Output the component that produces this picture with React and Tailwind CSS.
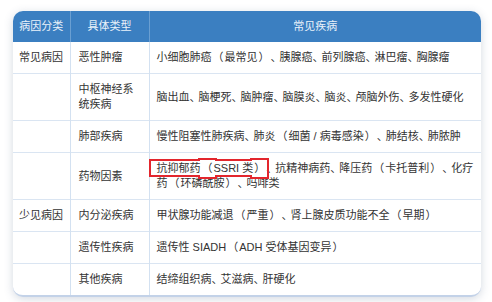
// CJK punctuation set in fixed boxes so spacing stays even
const PUNCT = {
  '（': 'inline-block w-[13px] text-center',
  '）': 'inline-block w-[13px] text-center',
  '、': 'inline-block w-[9px] text-left',
}

function fw(s) {
  return s.split(/([（）、])/).map((part, i) =>
    PUNCT[part] ? <span key={i} className={PUNCT[part]}>{part}</span> : part
  )
}

const rows = [
  { group: '常见病因', type: '恶性肿瘤', text: fw('小细胞肺癌（最常见）、胰腺癌、前列腺癌、淋巴瘤、胸腺瘤') },
  { group: '', type: '中枢神经系统疾病', text: fw('脑出血、脑梗死、脑肿瘤、脑膜炎、脑炎、颅脑外伤、多发性硬化') },
  { group: '', type: '肺部疾病', text: fw('慢性阻塞性肺疾病、肺炎（细菌 / 病毒感染）、肺结核、肺脓肿') },
  {
    group: '',
    type: '药物因素',
    text: (
      <>
        <span className="outline-2 outline-[#e3262d] outline-offset-[1px] pl-[5px] -ml-[5px]">{fw('抗抑郁药（SSRI 类）')}</span>
        {fw('、抗精神病药、降压药（卡托普利）、化疗')}
        <br />
        {fw('药（环磷酰胺）、吗啡类')}
      </>
    ),
  },
  { group: '少见病因', type: '内分泌疾病', text: fw('甲状腺功能减退（严重）、肾上腺皮质功能不全（早期）') },
  { group: '', type: '遗传性疾病', text: fw('遗传性 SIADH（ADH 受体基因变异）') },
  { group: '', type: '其他疾病', text: fw('结缔组织病、艾滋病、肝硬化') },
]

export default function App() {
  return (
    <div className="w-[492px] h-[302px] bg-white pt-[11px] pl-[13px]" style={{ fontFamily: '"Liberation Sans", "Noto Sans CJK SC", sans-serif' }}>
      <div className="w-[468px] rounded-[10px] overflow-hidden bg-white shadow-[0_2px_10px_rgba(60,80,120,0.22)] border-b-2 border-[#c3d2e8]">
        <table className="w-full table-fixed border-collapse text-[11px] leading-[15px] text-[#333]">
          <colgroup>
            <col className="w-[57px]" />
            <col className="w-[79px]" />
            <col />
          </colgroup>
          <thead>
            <tr className="bg-[#3b7fc1] text-[#eaf2fa]">
              <th className="font-normal py-2 px-0 border-r border-[#6a9fd2]">病因分类</th>
              <th className="font-normal py-2 px-1 border-r border-[#6a9fd2]">具体类型</th>
              <th className="font-normal py-2 px-1">常见疾病</th>
            </tr>
          </thead>
          <tbody>
            {rows.map((r, i) => (
              <tr key={i} className={i < rows.length - 1 ? 'border-b border-[#dae5f2]' : ''}>
                <td className="py-2 pl-[6px] pr-0 border-r border-[#d3e1f1] align-middle">{r.group}</td>
                <td className="py-2 pl-[8px] pr-2 border-r border-[#d3e1f1] align-middle">{r.type}</td>
                <td className="py-2 pl-[7px] pr-[2px] align-middle">{r.text}</td>
              </tr>
            ))}
          </tbody>
        </table>
      </div>
    </div>
  )
}
